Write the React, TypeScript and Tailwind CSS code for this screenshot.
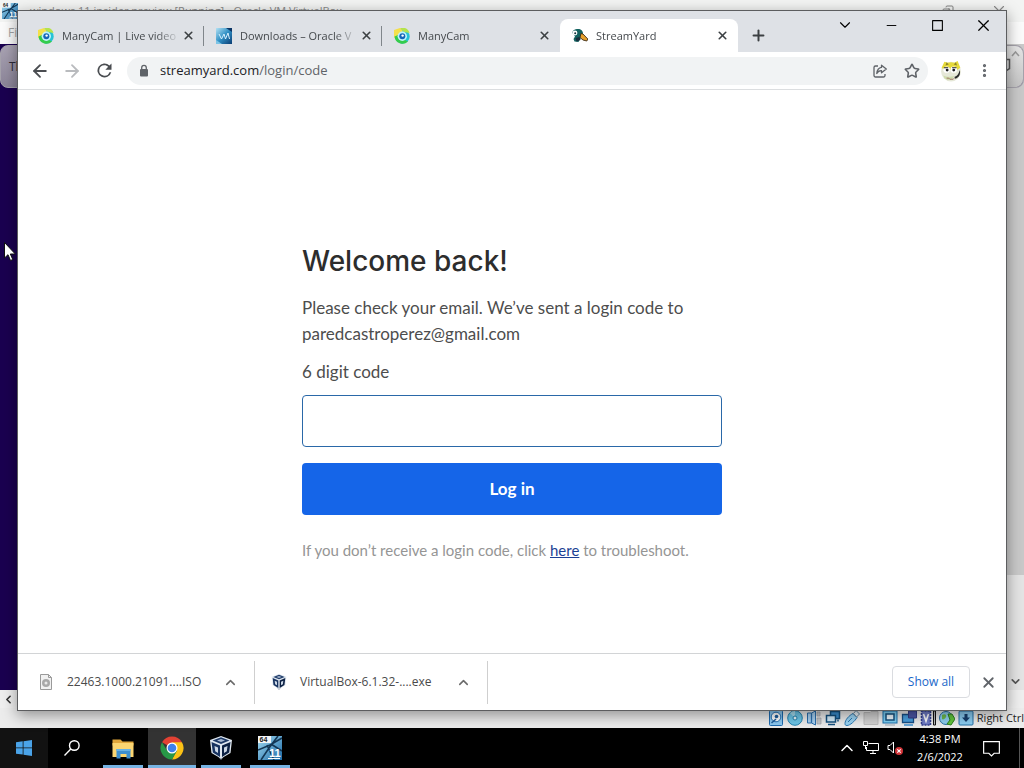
import React, { useState } from 'react';
import {
  ArrowLeft,
  ArrowRight,
  ChevronDown,
  ChevronLeft,
  ChevronUp,
  Copy,
  Minus,
  MoreVertical,
  Plus,
  Square,
  Star,
  X
} from 'lucide-react';

type IconProps = { className?: string };

const ManyCamIcon: React.FC<IconProps> = ({ className }) => (
  <svg viewBox="0 0 16 16" className={className} aria-hidden="true">
    <circle cx="8.500" cy="8.500" r="7.200" fill="#27c3d6" />
    <path d="M0 10V2l6-2 3 3-5 5z" fill="#f4e04a" />
    <path d="M6 0h5a7 7 0 0 1 4.500 5L10 4z" fill="#b5e34c" />
    <path d="M.5 8.500a8 8 0 0 0 13.500 5L9 11 4 7z" fill="#35cc4c" />
    <circle cx="8.300" cy="8.200" r="4.700" fill="#bff3fb" />
    <circle cx="8.300" cy="8.200" r="3" fill="#1565b8" />
    <circle cx="8.600" cy="7.600" r="1.200" fill="#fff" />
  </svg>
);

const OracleIcon: React.FC<IconProps> = ({ className }) => (
  <svg viewBox="0 0 16 16" className={className} aria-hidden="true">
    <defs>
      <linearGradient id="oracle-bg" x1="0" y1="0" x2="1" y2="1">
        <stop offset="0" stopColor="#b4e2f4" />
        <stop offset=".5" stopColor="#2f8fc4" />
        <stop offset="1" stopColor="#0a3c73" />
      </linearGradient>
    </defs>
    <rect width="16" height="16" fill="url(#oracle-bg)" />
    <path d="M3 6l2.500 5L8 6l1.500 5L12 5l1.500 6" fill="none" stroke="#d9f1ff" strokeWidth="1" />
    <path d="M10 0h6v4z" fill="#0b3566" />
    <path d="M0 12l6 4H0z" fill="#7cc4e6" />
  </svg>
);

const DuckIcon: React.FC<IconProps> = ({ className }) => (
  <svg viewBox="0 0 16 16" className={className} aria-hidden="true">
    <path d="M.5 5C.5 2 3 1 6 1c3 0 5 2 5 4.500L10 9l-2 2-1.500 3-4-.5-1-2.500L3 8.500z" fill="#12615f" />
    <path d="M3.500 10l4-1 1 3-4 1.500z" fill="#172f3d" />
    <path d="M9 5.500l2 .5 4.800 5-1 2-3.800-1-3-2.500z" fill="#e6a02c" stroke="#3c2b16" strokeWidth=".9" />
    <circle cx="3" cy="5" r="2.400" fill="#fff" />
    <circle cx="3.200" cy="5.200" r="1" fill="#14323c" />
  </svg>
);

const AvatarIcon: React.FC<IconProps> = ({ className }) => (
  <svg viewBox="0 0 20 20" className={className} aria-hidden="true">
    <circle cx="10" cy="10.500" r="9" fill="#e6e8d8" />
    <path d="M1.500 7 4 1.500l3 1 3-.5 3 .5 3-1.500L18.500 7l-3 2H4z" fill="#e6da3a" />
    <path d="M6 2l2 2-3 1zM14.500 2l-2 2 3 1z" fill="#8d8526" />
    <ellipse cx="6" cy="8.800" rx="3" ry="2.800" fill="#fff" />
    <ellipse cx="12.500" cy="8.800" rx="3" ry="2.800" fill="#fff" />
    <path d="M3.500 6.500h4v1h-4zM11 6.500h4v1h-4z" fill="#222" />
    <circle cx="6.500" cy="9.200" r="1.300" fill="#1c1c1c" />
    <circle cx="12.500" cy="9.200" r="1.300" fill="#1c1c1c" />
    <path d="M18 9c1 4-1 7-4 8l-1-1.500c3-1 4-3 5-6.500z" fill="#2b2b2b" />
    <path d="M3 14c3 1.500 7 1.500 10 .5l-2 3-4 1-3-2z" fill="#cfdcae" />
    <path d="M6 16.500h2l1 1h3l1-1" fill="none" stroke="#9a6a5c" strokeWidth=".8" />
  </svg>
);

const VirtualBoxIcon: React.FC<IconProps> = ({ className }) => (
  <svg viewBox="0 0 24 24" className={className} aria-hidden="true">
    <path d="M7 18l5 6 5-6z" fill="#8a94a4" />
    <path d="M12 0l11 4-1.500 13L12 22.500 2.500 17 1 4z" fill="#dfe7f0" />
    <path d="M12 1.300 20.500 4.400 12 8 3.500 4.400z" fill="#1e3a68" />
    <path d="M12 2.900 16 4.400 12 6 8 4.400z" fill="#a8b9d2" />
    <path d="M2.500 6 11 9.600V21l-7.200-4.500z" fill="#17325f" />
    <path d="M21.500 6 13 9.600V21l7.200-4.500z" fill="#0c2144" />
    <path d="M5.500 10 9 11.500V17l-2.800-1.700zM18.500 10 15 11.500V17l2.800-1.700z" fill="#cdd8e6" />
  </svg>
);

const ElevenIcon: React.FC<IconProps> = ({ className }) => (
  <svg viewBox="0 0 24 24" className={className} aria-hidden="true">
    <defs>
      <linearGradient id="eleven-bg" x1="0" y1="0" x2="1" y2="1">
        <stop offset="0" stopColor="#a5dcf3" />
        <stop offset="1" stopColor="#1b6aa6" />
      </linearGradient>
    </defs>
    <rect width="24" height="24" fill="url(#eleven-bg)" />
    <path d="M0 14 12 9 24 2M20 0 11 12 3 24M9 9l7 15M13 8l11 7" stroke="#123654" strokeWidth="1.600" fill="none" />
    <rect width="13" height="7" fill="#f2f5f7" />
    <text x="1.500" y="6" fontSize="7" fontWeight="700" fontFamily="Liberation Sans, sans-serif" fill="#222">64</text>
    <text x="11" y="21" fontSize="11" fontWeight="700" fontFamily="Liberation Sans, sans-serif" fill="#fff">11</text>
    <path d="M10 22.500h12" stroke="#fff" />
  </svg>
);

const ChromeIcon: React.FC<IconProps> = ({ className }) => (
  <svg viewBox="0 0 24 24" className={className} aria-hidden="true">
    <path d="M12 12 2.040 6.250A11.500 11.500 0 0 1 21.960 6.250z" fill="#e24234" />
    <path d="M12 6.250h9.960A11.500 11.500 0 0 1 12 23.500l4.800-8.700z" fill="#fbc116" />
    <path d="M2.040 6.250A11.500 11.500 0 0 0 12 23.500l4.900-8.700L7.200 14.800z" fill="#279847" />
    <circle cx="12" cy="12" r="5.500" fill="#fff" />
    <circle cx="12" cy="12" r="4.300" fill="#3f80ec" />
  </svg>
);

const FolderIcon: React.FC<IconProps> = ({ className }) => (
  <svg viewBox="0 0 24 24" className={className} aria-hidden="true">
    <path d="M1.500 3.500h8l2 2h11v4h-21z" fill="#e0a63b" />
    <path d="M1.500 7h21v14h-21z" fill="#fbd571" />
    <path d="M5.500 13h14v9.500h-4V18h-6v4.500h-4z" fill="#3d8fd0" />
    <path d="M5.500 13h14v2h-14z" fill="#67b2e6" />
  </svg>
);

const WindowsIcon: React.FC<IconProps> = ({ className }) => (
  <svg viewBox="0 0 16 16" className={className} fill="#4aa3e8" aria-hidden="true">
    <path d="M0 2.300 6.700 1.300v6.200H0zM7.500 1.200 16 0v7.500H7.500zM0 8.300h6.700v6.300L0 13.700zM7.500 8.300H16V16l-8.500-1.200z" />
  </svg>
);

const SearchIcon: React.FC<IconProps> = ({ className }) => (
  <svg viewBox="0 0 16 16" className={className} fill="none" stroke="#fff" strokeWidth="1.400" aria-hidden="true">
    <circle cx="10.300" cy="5.500" r="4.800" />
    <path d="M6.800 9 .5 15.500" />
  </svg>
);

const ReloadIcon: React.FC<IconProps> = ({ className }) => (
  <svg viewBox="0 0 24 24" className={className} fill="currentColor" aria-hidden="true">
    <path d="M17.650 6.350A8 8 0 1 0 19.730 14h-2.080A6 6 0 1 1 12 6c1.660 0 3.140.69 4.220 1.780L13 11h7V4z" />
  </svg>
);

const LockIcon: React.FC<IconProps> = ({ className }) => (
  <svg viewBox="0 0 16 16" className={className} aria-hidden="true">
    <rect x="4" y="6" width="8" height="7.500" rx="1" fill="#5f6368" />
    <path d="M5.700 6.500V4.700a2.300 2.300 0 0 1 4.600 0v1.800" fill="none" stroke="#5f6368" strokeWidth="1.300" />
  </svg>
);

const ShareIcon: React.FC<IconProps> = ({ className }) => (
  <svg viewBox="0 0 16 16" className={className} fill="none" stroke="currentColor" strokeWidth="1.300" strokeLinejoin="round" aria-hidden="true">
    <path d="M6 3H3.500A1.500 1.500 0 0 0 2 4.500v8A1.500 1.500 0 0 0 3.500 14h8a1.500 1.500 0 0 0 1.500-1.500V11" />
    <path d="M9.500 2.200 14.300 6l-4.800 3.800V7.600C7.300 7.500 5.800 8.500 4.800 10.500c.3-3.500 2-5.700 4.700-6.100z" />
  </svg>
);

const DiscFileIcon: React.FC<IconProps> = ({ className }) => (
  <svg viewBox="0 0 16 16" className={className} aria-hidden="true">
    <path d="M2.500.5h8l3 3v12h-11z" fill="#f1f1f1" stroke="#9a9a9a" />
    <path d="M10.500.5v3h3" fill="none" stroke="#9a9a9a" />
    <circle cx="8" cy="9" r="4" fill="#a8a8a8" />
    <circle cx="8" cy="9" r="1.500" fill="#e9e9e9" />
  </svg>
);

const NetworkIcon: React.FC<IconProps> = ({ className }) => (
  <svg viewBox="0 0 16 16" className={className} fill="none" stroke="#fff" aria-hidden="true">
    <path d="M5.500 3.500h10v7h-12V7M7 13.500h6M10 10.500v3M.5 1.500h4v4h-4zM2.500 5.500V9" />
  </svg>
);

const MutedIcon: React.FC<IconProps> = ({ className }) => (
  <svg viewBox="0 0 16 16" className={className} aria-hidden="true">
    <path d="M1 5.500h2L6.500 2v11L3 9.500H1z" fill="none" stroke="#fff" />
    <circle cx="12" cy="11" r="4" fill="#d13438" />
    <path d="m10.300 9.300 3.400 3.400m0-3.400-3.400 3.400" stroke="#fff" strokeWidth="1.100" />
  </svg>
);

const NoticeIcon: React.FC<IconProps> = ({ className }) => (
  <svg viewBox="0 0 16 16" className={className} fill="none" stroke="#fff" strokeWidth="1.100" aria-hidden="true">
    <path d="M.6 1.500h14.800v11H10.500L8 15l-2.500-2.500H.6z" />
  </svg>
);

// Status indicators in the lower right corner of the virtual machine window
const statusIcons: { name: string; art: React.ReactNode }[] = [
  {
    name: 'Hard disk',
    art: (
      <>
        <rect x="1.500" y=".5" width="13" height="15" rx="1" fill="#8cc9f2" stroke="#1d6bb0" />
        <circle cx="8" cy="7" r="4.800" fill="#fff" stroke="#2674b8" />
        <circle cx="8.500" cy="6.500" r="1.800" fill="#1d5e9e" />
        <path d="M3.500 13 8 9" stroke="#1d5e9e" strokeWidth="1.500" />
      </>
    )
  },
  {
    name: 'Optical disc',
    art: (
      <>
        <circle cx="8" cy="8" r="7.300" fill="#6cc6e8" stroke="#2383b0" />
        <path d="M8 8 3 3a7 7 0 0 1 5-2z" fill="#a8dff2" />
        <circle cx="8" cy="8" r="2" fill="#eaf8fd" stroke="#2383b0" />
      </>
    )
  },
  {
    name: 'Audio',
    art: (
      <>
        <path d="M1.500 3h4l4-2v14l-4-2h-4z" fill="#a9d2f2" stroke="#2a6fae" />
        <path d="M5.500 3v10" stroke="#2a6fae" strokeWidth="1.300" />
        <path d="M11 2h3v4h-3zM11 8h4v6h-4z" fill="#c6c9cc" stroke="#a0a5aa" strokeWidth=".7" />
      </>
    )
  },
  {
    name: 'Network',
    art: (
      <>
        <path d="M5.500 1.500h9v7h-9z" fill="#3b8fd1" stroke="#14507f" strokeWidth="1.500" />
        <path d="M1.500 5.500h9v6.500h-9z" fill="#d5edfb" stroke="#14507f" strokeWidth="1.500" />
        <path d="M3 14.500h7M13 9.500v2" stroke="#14507f" strokeWidth="1.500" />
      </>
    )
  },
  {
    name: 'USB',
    art: (
      <>
        <path d="M1 13.500C1 10 5 5.500 9 3.500l4 4C11 11 6 15.500 3 15.500c-1.500 0-2-.5-2-2z" fill="#9bd4f4" stroke="#2a79b3" />
        <path d="m9.500 3.500 2.500-3 3.500 3.500-3 3z" fill="#e9f2f8" stroke="#6b8aa0" />
        <path d="m4 12 4-4" stroke="#2a79b3" />
      </>
    )
  },
  {
    name: 'Shared folders',
    art: <path d="M1 2.500h6l1-1h7v13H1z" fill="#d2d2d2" stroke="#bcbcbc" />
  },
  {
    name: 'Display',
    art: (
      <>
        <rect x="1" y="1" width="14" height="12" fill="#7fd0f4" stroke="#1a70ad" />
        <rect x="4" y="4" width="8" height="6" fill="#eef9ff" stroke="#14507f" strokeWidth="1.500" />
        <path d="M3 15h10" stroke="#9aa7b2" />
      </>
    )
  },
  {
    name: 'Recording',
    art: (
      <>
        <path d="M1.500 4.500h11v8h-11z" fill="#4aa1e0" stroke="#174f86" strokeWidth="1.300" />
        <path d="M7.500 1h8v7h-8z" fill="#4d58a8" stroke="#333d85" />
        <path d="M3 15h9" stroke="#3b8fd1" strokeWidth="1.500" />
      </>
    )
  },
  {
    name: 'Virtualization',
    art: (
      <>
        <rect x="1.500" y="1" width="9" height="14" fill="#6f7cc6" stroke="#333f8f" strokeWidth="1.500" strokeDasharray="2 1" />
        <path d="m3.500 4 2.500 7 2.500-7" fill="none" stroke="#fff" strokeWidth="1.600" />
        <path d="M13.500 1v14h2V1z" fill="#b9bcc0" stroke="#111" />
      </>
    )
  },
  {
    name: 'Mouse',
    art: (
      <>
        <circle cx="7" cy="8" r="6.500" fill="#8fd0f2" stroke="#246da1" />
        <path d="M3 5c3-2 5 0 4 2s-3 3-4 2z" fill="#6dbb4f" />
        <path d="M9 4h4l3 5-4 6-4-1 3-4z" fill="#61c53c" stroke="#2c7e1d" />
      </>
    )
  },
  {
    name: 'Keyboard',
    art: (
      <>
        <rect x="1" y="1" width="14" height="14" rx="1" fill="#8bcdf2" stroke="#2571a7" />
        <path d="M6.500 4h3v3.500H12l-4 4.500-4-4.500h2.500z" fill="#163f6d" />
      </>
    )
  }
];

interface Tab {
  title: string;
  icon: React.FC<IconProps>;
  divider?: boolean;
}

const tabs: Tab[] = [
  { title: 'ManyCam | Live video', icon: ManyCamIcon, divider: true },
  { title: 'Downloads – Oracle V', icon: OracleIcon, divider: true },
  { title: 'ManyCam', icon: ManyCamIcon },
  { title: 'StreamYard', icon: DuckIcon }
];

const downloads = [
  { name: '22463.1000.21091....ISO', icon: DiscFileIcon },
  { name: 'VirtualBox-6.1.32-....exe', icon: VirtualBoxIcon }
];

const taskbarApps = [
  { name: 'File Explorer', icon: FolderIcon },
  { name: 'Google Chrome', icon: ChromeIcon },
  { name: 'VirtualBox Manager', icon: VirtualBoxIcon },
  { name: 'Windows 11 machine', icon: ElevenIcon }
];

const TabStrip: React.FC = () => {
  const [active, setActive] = useState(3);

  return (
    <div className="flex h-[41px] items-start justify-between bg-[#dee1e6]">
      <div className="flex h-full min-w-0 items-end pl-2">
        {tabs.map(({ title, icon: Icon, divider }, i) => (
          <div
            key={i}
            className={`relative flex h-[33px] w-[178px] items-center pl-3 pr-2 ${i === active ? 'rounded-t-lg bg-white' : ''}`}
          >
            <button onClick={() => setActive(i)} className="flex min-w-0 flex-1 items-center gap-2 text-left">
              <Icon className="size-4 shrink-0" />
              <span className="flex-1 overflow-hidden whitespace-nowrap text-[11px] leading-4 text-[#45494d] [mask-image:linear-gradient(to_right,black_80%,transparent)]">
                {title}
              </span>
            </button>
            <button aria-label={`Close ${title}`} className="flex size-4 items-center justify-center text-[#3c4043]">
              <X size={13} strokeWidth={3} />
            </button>
            {divider && <span className="absolute right-0 top-[7px] h-5 w-px bg-[#80868b]" />}
          </div>
        ))}
        <button aria-label="New tab" className="ml-1.5 flex h-[33px] w-7 items-center justify-center text-[#3c4043]">
          <Plus size={17} strokeWidth={2.800} />
        </button>
      </div>
      <div className="flex h-7 shrink-0 text-black">
        <button aria-label="Search tabs" className="flex w-[46px] items-center justify-center">
          <ChevronDown size={18} strokeWidth={1.500} />
        </button>
        <button aria-label="Minimize" className="flex w-[46px] items-center justify-center">
          <Minus size={15} strokeWidth={1.500} />
        </button>
        <button aria-label="Maximize" className="flex w-[46px] items-center justify-center">
          <Square size={13} strokeWidth={2} className="[&_rect]:[rx:0]" />
        </button>
        <button aria-label="Close window" className="flex w-[46px] items-center justify-center">
          <X size={19} strokeWidth={1.500} />
        </button>
      </div>
    </div>
  );
};

const Toolbar: React.FC = () => (
  <div className="flex h-[38px] items-center border-b border-[#dcdee0] bg-white px-1.5 text-[#5f6368]">
    <button aria-label="Back" className="flex w-8 justify-center text-[#4a4d51]">
      <ArrowLeft size={20} strokeWidth={2.200} />
    </button>
    <button aria-label="Forward" className="flex w-8 justify-center text-[#b9bbbe]">
      <ArrowRight size={20} strokeWidth={2.200} />
    </button>
    <button aria-label="Reload" className="flex w-8 justify-center text-[#4a4d51]">
      <ReloadIcon className="size-[21px]" />
    </button>
    <div className="ml-[7px] flex h-7 flex-1 items-center rounded-full bg-[#f1f3f4] pl-[9px]">
      <LockIcon className="size-4" />
      <div className="ml-2 flex-1 text-[13px] text-[#5f6368]">
        <span className="text-[#202124]">streamyard.com</span>/login/code
      </div>
      <button aria-label="Share" className="flex w-8 justify-center">
        <ShareIcon className="size-4" />
      </button>
      <button aria-label="Bookmark" className="flex w-8 justify-center">
        <Star size={16} strokeWidth={2.400} />
      </button>
    </div>
    <button aria-label="Profile" className="ml-[7px] flex w-8 justify-center">
      <AvatarIcon className="size-[22px]" />
    </button>
    <button aria-label="Menu" className="ml-px flex w-8 justify-center">
      <MoreVertical size={17} strokeWidth={2.500} />
    </button>
  </div>
);

const LoginForm: React.FC = () => {
  const [code, setCode] = useState('');

  const handleSubmit = (e: React.FormEvent) => {
    e.preventDefault();
  };

  return (
    <main className="flex flex-1 flex-col items-center justify-center bg-white pt-[58px] font-['Lato',sans-serif]">
      <form onSubmit={handleSubmit} className="flex w-[420px] max-w-full flex-col text-[#4d4d4d]">
        <h1 className="font-['Inter',sans-serif] text-[28px] font-medium leading-10 text-[#2d2d2d]">Welcome back!</h1>
        <p className="mt-3.5 text-[17px] leading-[26px]">
          Please check your email. We’ve sent a login code to paredcastroperez@gmail.com
        </p>
        <label htmlFor="code" className="mt-3 text-[17px] leading-[26px]">
          6 digit code
        </label>
        <input
          id="code"
          type="text"
          inputMode="numeric"
          value={code}
          onChange={(e) => setCode(e.target.value)}
          className="mt-2.5 h-[52px] rounded border border-[#2a68a8] bg-white px-4 text-[17px] outline-none"
        />
        <button type="submit" className="mt-4 h-[52px] rounded bg-[#1565e8] text-[17px] font-bold text-white">
          Log in
        </button>
        <p className="mt-[25px] text-[15px] leading-5 text-[#959595]">
          If you don’t receive a login code, click{' '}
          <a href="#troubleshoot" className="text-[#1c3f94] underline">here</a> to troubleshoot.
        </p>
      </form>
    </main>
  );
};

const DownloadShelf: React.FC = () => (
  <footer className="flex h-[57px] items-center border-t border-[#d2d4d6] bg-white pl-1 pr-2">
    {downloads.map(({ name, icon: Icon }) => (
      <div key={name} className="flex h-[43px] w-[233px] items-center border-r border-[#cfcfcf] px-4">
        <Icon className="size-4 shrink-0" />
        <span className="ml-[13px] flex-1 whitespace-nowrap text-xs text-[#4a4a4a]">{name}</span>
        <button aria-label={`Options for ${name}`} className="text-[#6b6b6b]">
          <ChevronUp size={15} strokeWidth={2.500} />
        </button>
      </div>
    ))}
    <button className="ml-auto h-8 w-[78px] rounded border border-[#dadce0] text-xs text-[#1a67c9]">Show all</button>
    <button aria-label="Close downloads" className="ml-2 flex w-5 justify-center text-[#5f6368]">
      <X size={17} strokeWidth={2.500} />
    </button>
  </footer>
);

const VirtualMachineWindow: React.FC = () => (
  <section className="flex flex-1 flex-col bg-[#f3f4f3]">
    <div className="flex h-[22px] items-center gap-3 pl-0.5 pr-4 text-[11px] text-[#8a8a8a]">
      <ElevenIcon className="size-4" />
      <span className="flex-1 whitespace-nowrap">windows 11 insider preview [Running] - Oracle VM VirtualBox</span>
      <Copy size={12} strokeWidth={1.800} className="mr-6 -scale-x-100 text-[#777]" />
      <X size={18} strokeWidth={1.500} />
    </div>
    <div className="flex h-[22px] items-center bg-[#fbfbfb] pl-2 text-xs text-[#a3a3a3]">File</div>
    <div className="relative flex flex-1">
      <div className="flex-1 bg-[#1a0050]" />
      <div className="flex w-[17px] flex-col bg-[#e4e4e4]">
        <div className="h-[531px] bg-[#c9c9c9]" />
        <ChevronDown size={13} strokeWidth={3} className="mx-auto mb-0.5 mt-auto text-[#555]" />
      </div>
      <div className="absolute inset-x-0 top-px flex h-[43px] items-center justify-between rounded-lg border border-[#a5a2ab] bg-linear-to-b from-[#a9a3b3] to-[#8b8498] pl-2 text-xs text-[#2e2a38]">
        <span>The</span>
        <span className="flex h-full w-[17px] justify-center rounded-r-lg bg-linear-to-b from-[#e6e6e6] to-[#c4c4c4] pt-1 text-[#8d8d8d]">
          <svg viewBox="0 0 17 36" className="h-9 w-[17px]" fill="none" aria-hidden="true">
            <path d="m6 6 3.500-4L13 6" stroke="#999" strokeWidth="1.500" />
            <path d="M0 9.500h3.500v9L0 21" stroke="#555" strokeWidth="1.500" />
          </svg>
        </span>
      </div>
    </div>
    <div className="flex h-[18px] items-center bg-[#efefef] pl-0.5 text-[#333]">
      <ChevronLeft size={13} strokeWidth={3} />
    </div>
    <div className="flex h-5 items-center justify-end gap-[3px] bg-[#ececec]">
      {statusIcons.map(({ name, art }) => (
        <svg key={name} viewBox="0 0 16 16" role="img" aria-label={name} className="size-4">
          {art}
        </svg>
      ))}
      <span className="whitespace-nowrap text-[11px] text-[#1f1f1f]">Right Ctrl</span>
    </div>
  </section>
);

const Taskbar: React.FC = () => (
  <nav className="flex h-10 items-stretch bg-black text-white">
    <button aria-label="Start" className="flex w-12 items-center justify-center bg-[#121212]">
      <WindowsIcon className="size-4" />
    </button>
    <button aria-label="Search" className="flex w-12 items-center justify-center">
      <SearchIcon className="size-4" />
    </button>
    <div className="ml-[3px] flex gap-px">
      {taskbarApps.map(({ name, icon: Icon }) => (
        <button
          key={name}
          aria-label={name}
          className={`flex w-12 flex-col items-center justify-between pt-2 ${name === 'Google Chrome' ? 'bg-[#333]' : ''}`}
        >
          <Icon className="size-6" />
          <span className={`h-[3px] bg-[#76b3e3] ${name === 'Google Chrome' ? 'w-12' : 'w-10'}`} />
        </button>
      ))}
    </div>
    <div className="ml-auto flex items-center">
      <button aria-label="Hidden icons" className="flex w-6 justify-center">
        <ChevronUp size={20} strokeWidth={1.800} />
      </button>
      <NetworkIcon className="ml-1 size-4" />
      <MutedIcon className="ml-2 size-4" />
      <div className="ml-3 w-[50px] whitespace-nowrap text-center text-[11px] leading-[18px]">
        <div>4:38 PM</div>
        <div>2/6/2022</div>
      </div>
      <button aria-label="Notifications" className="ml-2 flex w-9 justify-center">
        <NoticeIcon className="size-[17px]" />
      </button>
      <span className="ml-2.5 mr-1 h-10 w-px bg-[#555]" />
    </div>
  </nav>
);

const App: React.FC = () => (
  <div className="flex min-h-screen flex-col overflow-hidden font-['Open_Sans','Noto_Sans',sans-serif]">
    <div className="relative flex flex-1 flex-col">
      <VirtualMachineWindow />
      <section className="absolute bottom-[17px] left-[17px] right-[17px] top-2.5 flex flex-col border border-[#5c5d5f] bg-white shadow-[0_4px_14px_rgba(0,0,0,0.4)]">
        <TabStrip />
        <Toolbar />
        <LoginForm />
        <DownloadShelf />
      </section>
      <svg viewBox="0 0 12 19" className="absolute left-1 top-[242px] h-[19px] w-3" aria-hidden="true">
        <path d="M.5.5v15.500l3.500-3.300L6.500 18.500l2.300-1-2.500-5.500h5z" fill="#fff" stroke="#111" />
      </svg>
    </div>
    <Taskbar />
  </div>
);

export default App;
